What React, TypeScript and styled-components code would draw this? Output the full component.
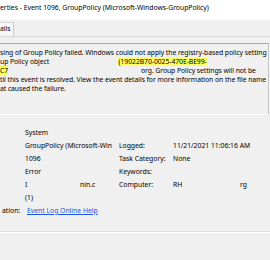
import React from 'react';
import styled, { createGlobalStyle } from 'styled-components';

const GlobalStyle = createGlobalStyle`
  html, body {
    margin: 0;
    padding: 0;
    background: #f0f0f0;
    overflow: hidden;
  }
  body {
    font-family: 'Noto Sans', 'Liberation Sans', sans-serif;
    color: #000;
  }
`;

const FONT = 6.8;

export default function App() {
  return (
    <>
      <GlobalStyle />
      <Window>
        <TitleBar>erties - Event 1096, GroupPolicy (Microsoft-Windows-GroupPolicy)</TitleBar>
        <TabStrip>
          <Tab>ails</Tab>
        </TabStrip>
        <Body>
          <MessageBox>
            <Line>sing of Group Policy failed. Windows could not apply the registry-based policy setting</Line>
            <Line>
              <Seg $w={118}>up Policy object</Seg>
              <Mark>{'{19022B70-0025-470E-BE99-'}</Mark>
            </Line>
            <Line>
              <Seg $w={141}>
                <Mark>C7</Mark>
              </Seg>
              org. Group Policy settings will not be
            </Line>
            <Line>til this event is resolved. View the event details for more information on the file name</Line>
            <Line>at caused the failure.</Line>
          </MessageBox>
          <Details>
            <Cell />
            <Cell>System</Cell>
            <Cell />
            <Cell />

            <Cell />
            <Cell>GroupPolicy (Microsoft-Win</Cell>
            <Cell>Logged:</Cell>
            <Cell>11/21/2021 11:06:16 AM</Cell>

            <Cell />
            <Cell>1096</Cell>
            <Cell>Task Category:</Cell>
            <Cell>None</Cell>

            <Cell />
            <Cell>Error</Cell>
            <Cell>Keywords:</Cell>
            <Cell />

            <Cell />
            <Cell>
              <Seg $w={55}>I</Seg>nin.c
            </Cell>
            <Cell>Computer:</Cell>
            <Cell>
              <Seg $w={67}>RH</Seg>rg
            </Cell>

            <Cell />
            <Cell>(1)</Cell>
            <Cell />
            <Cell />

            <Cell $tight>ation:</Cell>
            <Cell $tight>
              <HelpLink href="#">Event Log Online Help</HelpLink>
            </Cell>
            <Cell />
            <Cell />
          </Details>
          <Separator />
        </Body>
      </Window>
    </>
  );
}

const Window = styled.div`
  display: flex;
  flex-direction: column;
  width: 270px;
  height: 260px;
  font-size: ${FONT}px;
`;

const TitleBar = styled.div`
  background: #fff;
  height: 20px;
  line-height: 15px;
  white-space: nowrap;
`;

const TabStrip = styled.div`
  display: flex;
  align-items: flex-end;
  height: 16px;
  border-bottom: 1px solid #dadada;
`;

const Tab = styled.div`
  height: 13px;
  line-height: 12px;
  padding-right: 2px;
  background: #f7f7f7;
  border-right: 1px solid #c9c9c9;
  border-top: 1px solid #d9d9d9;
`;

const Body = styled.div`
  display: flex;
  flex-direction: column;
  padding-top: 6px;
`;

const MessageBox = styled.div`
  height: 66px;
  padding-top: 4px;
  margin-right: 1px;
  border-top: 1px solid #a8a8a8;
  border-right: 1px solid #c8c8c8;
  border-bottom: 1px solid #fbfbfb;
  overflow: hidden;
  letter-spacing: -0.05px;
`;

const Line = styled.div`
  height: 9px;
  line-height: 9px;
  white-space: nowrap;
`;

const Seg = styled.span<{ $w: number }>`
  display: inline-block;
  width: ${(p) => p.$w}px;
`;

const Mark = styled.span`
  background: #ffff60;
`;

const Details = styled.div`
  display: grid;
  grid-template-columns: 25px 94px 54px 1fr;
  grid-auto-rows: 13px;
  margin-top: 11px;
`;

const Cell = styled.div<{ $tight?: boolean }>`
  line-height: 13px;
  white-space: nowrap;
  margin-left: ${(p) => (p.$tight ? 2 : 0)}px;
`;

const HelpLink = styled.a`
  color: #1a55e6;
  text-decoration: underline;
`;

const Separator = styled.div`
  margin-top: 14px;
  height: 0;
  border-top: 1px solid #e2e2e2;
  border-bottom: 1px solid #fdfdfd;
`;
